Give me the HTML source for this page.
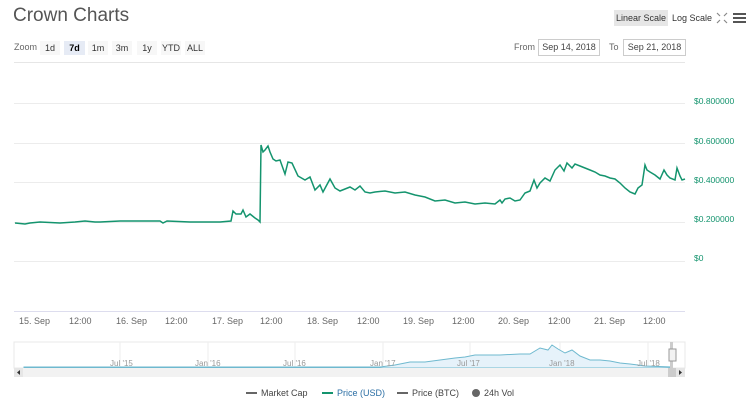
<!DOCTYPE html>
<html><head><meta charset="utf-8"><style>
body{margin:0;width:750px;height:404px;background:#fff;font-family:"Liberation Sans",sans-serif;overflow:hidden;position:relative}
.a{position:absolute;white-space:nowrap}
.btn{position:absolute;top:41px;height:14px;font-size:9px;color:#333;text-align:center;line-height:14px;background:#f7f7f7}
.date{position:absolute;top:39px;height:15px;border:1px solid #ccc;font-size:9px;color:#444;line-height:15px;text-align:center}
.xl{position:absolute;top:316px;font-size:9px;color:#666}
.yl{position:absolute;left:694px;font-size:8.5px;color:#14946e}
</style></head><body>
<div class="a" style="left:13px;top:5px;font-size:19px;color:#555">Crown Charts</div>
<div class="a" style="left:14px;top:42px;font-size:9px;color:#666">Zoom</div>
<div class="btn" style="left:40px;width:20px">1d</div>
<div class="btn" style="left:64px;width:21px;background:#e6ebf5;font-weight:bold;color:#000">7d</div>
<div class="btn" style="left:88px;width:20px">1m</div>
<div class="btn" style="left:112px;width:20px">3m</div>
<div class="btn" style="left:137px;width:20px">1y</div>
<div class="btn" style="left:161px;width:20px">YTD</div>
<div class="btn" style="left:185px;width:20px">ALL</div>
<div class="a" style="left:614px;top:10px;width:54px;height:16px;background:#e6e6e6;font-size:9px;line-height:16px;text-align:center;color:#333">Linear Scale</div>
<div class="a" style="left:672px;top:10px;font-size:9px;line-height:16px;color:#333">Log Scale</div>
<svg class="a" style="left:716px;top:12px" width="12" height="12" viewBox="0 0 12 12" stroke="#888" stroke-width="1.2" fill="none"><path d="M1 1l3 3M11 1l-3 3M1 11l3-3M11 11l-3-3"/></svg>
<svg class="a" style="left:733px;top:12px" width="13" height="12"><rect y="1" width="13" height="2" fill="#555"/><rect y="5" width="13" height="2" fill="#555"/><rect y="9" width="13" height="2" fill="#555"/></svg>
<div class="a" style="left:514px;top:42px;font-size:9px;color:#666">From</div>
<div class="date" style="left:538px;width:60px">Sep 14, 2018</div>
<div class="a" style="left:609px;top:42px;font-size:9px;color:#666">To</div>
<div class="date" style="left:623px;width:61px">Sep 21, 2018</div>
<div class="a" style="left:14px;top:62px;width:671px;height:1px;background:#e6e6e6"></div>
<svg class="a" style="left:0;top:0" width="750" height="404">
<g stroke="#ececec" stroke-width="1"><line x1="14" x2="685" y1="103.5" y2="103.5"/><line x1="14" x2="685" y1="143.5" y2="143.5"/><line x1="14" x2="685" y1="182.5" y2="182.5"/><line x1="14" x2="685" y1="222.5" y2="222.5"/><line x1="14" x2="685" y1="261.5" y2="261.5"/></g>
<line x1="14" x2="685" y1="311.5" y2="311.5" stroke="#dde"/>
<polyline fill="none" stroke="#14946e" stroke-width="1.5" points="15,223 25,224 30,223 40,222 60,223 75,222 85,221 95,222 100,222 120,221 140,221 160,221 163,223 167,221 190,222 200,222 220,222 231,221 233,211 236,214 241,214 243,210 246,217 250,214 255,218 258,220 260,222 261,145 263,152 265,150 268,146 270,152 273,159 276,161 280,160 285,174 288,162 292,163 298,176 305,180 310,177 315,190 320,185 323,192 330,179 335,188 340,191 345,189 350,187 355,190 360,186 365,192 370,193 375,192 385,191 395,193 405,192 415,195 425,197 435,201 445,200 455,203 465,202 475,204 485,203 495,204 500,200 502,203 505,199 510,198 515,201 520,200 525,193 530,191 534,180 537,188 540,183 545,178 550,181 555,170 560,165 564,171 567,163 572,168 575,164 580,166 590,170 595,172 600,175 605,176 610,178 615,179 620,183 625,188 630,192 635,194 638,188 642,185 645,165 647,170 650,172 655,175 660,179 664,170 667,175 670,178 675,180 677,168 680,176 682,180 685,179"/>
<rect x="14" y="342" width="671" height="26" fill="#fff" stroke="#e8e8e8"/>
<g stroke="#eee"><line x1="120" x2="120" y1="342" y2="368"/><line x1="208" x2="208" y1="342" y2="368"/><line x1="295" x2="295" y1="342" y2="368"/><line x1="383" x2="383" y1="342" y2="368"/><line x1="470" x2="470" y1="342" y2="368"/><line x1="560" x2="560" y1="342" y2="368"/><line x1="648" x2="648" y1="342" y2="368"/></g>
<path d="M24,367 L380,367 L395,365 L410,362 L425,362 L440,360 L455,358 L465,357 L475,355 L485,355 L500,355 L520,354 L530,354 L540,348 L548,350 L552,345 L558,349 L565,353 L572,350 L580,356 L590,360 L600,360 L610,361 L620,363 L630,364 L645,366 L672,367 L672,368 L24,368Z" fill="#e6f2fa" stroke="#6fb9cf" stroke-width="1"/>
<g font-family="Liberation Sans" font-size="8" fill="#999"><text x="110" y="366">Jul '15</text><text x="195" y="366">Jan '16</text><text x="283" y="366">Jul '16</text><text x="370" y="366">Jan '17</text><text x="457" y="366">Jul '17</text><text x="549" y="366">Jan '18</text><text x="637" y="366">Jul '18</text></g>
<rect x="670" y="342" width="3" height="26" fill="#ccc"/>
<rect x="669" y="349" width="7" height="12" fill="#f2f2f2" stroke="#999"/>
<rect x="14" y="368" width="671" height="9" fill="#f2f2f2"/>
<rect x="14" y="368" width="9" height="9" fill="#e6e6e6"/><path d="M20,370 l-3,2.5 l3,2.5z" fill="#333"/>
<rect x="676" y="368" width="9" height="9" fill="#e6e6e6"/><path d="M679,370 l3,2.5 l-3,2.5z" fill="#333"/>
<rect x="668" y="368" width="8" height="9" fill="#ccc"/>
<text x="744" y="148" font-family="Liberation Sans" font-size="8.5" font-weight="bold" fill="#14946e" transform="rotate(90 740 160)">Price (USD)</text>
<g font-family="Liberation Sans" font-size="9"><line x1="246" x2="257" y1="393" y2="393" stroke="#666" stroke-width="2"/><text x="261" y="396" fill="#444">Market Cap</text>
<line x1="322" x2="333" y1="393" y2="393" stroke="#14946e" stroke-width="2"/><text x="337" y="396" fill="#2c6fa5">Price (USD)</text>
<line x1="397" x2="408" y1="393" y2="393" stroke="#666" stroke-width="2"/><text x="412" y="396" fill="#444">Price (BTC)</text>
<circle cx="476" cy="393" r="4" fill="#666"/><text x="484" y="396" fill="#444">24h Vol</text></g>
</svg>
<div class="yl" style="top:96px">$0.800000</div>
<div class="yl" style="top:136px">$0.600000</div>
<div class="yl" style="top:175px">$0.400000</div>
<div class="yl" style="top:214px">$0.200000</div>
<div class="yl" style="top:253px">$0</div>
<div class="xl" style="left:19px">15. Sep</div>
<div class="xl" style="left:69px">12:00</div>
<div class="xl" style="left:116px">16. Sep</div>
<div class="xl" style="left:165px">12:00</div>
<div class="xl" style="left:212px">17. Sep</div>
<div class="xl" style="left:260px">12:00</div>
<div class="xl" style="left:307px">18. Sep</div>
<div class="xl" style="left:357px">12:00</div>
<div class="xl" style="left:403px">19. Sep</div>
<div class="xl" style="left:452px">12:00</div>
<div class="xl" style="left:498px">20. Sep</div>
<div class="xl" style="left:548px">12:00</div>
<div class="xl" style="left:594px">21. Sep</div>
<div class="xl" style="left:643px">12:00</div>
</body></html>
